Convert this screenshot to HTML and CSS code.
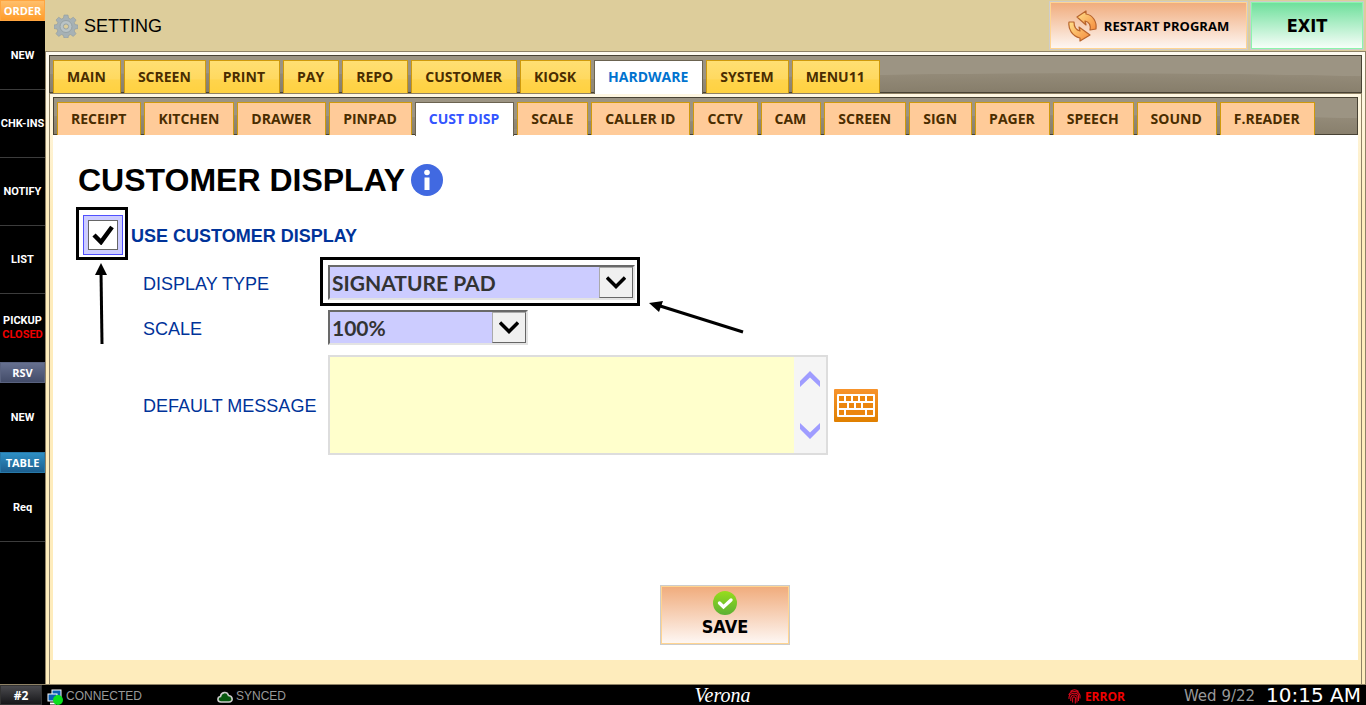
FILE: index.html
```html
<!DOCTYPE html>
<html lang="en">

<head>
  <meta charset="utf-8">
  <title>Setting - Customer Display</title>
  <link rel="stylesheet" href="styles.css">
</head>

<body>
  <div class="app">
    <div class="workspace">
      <!-- Left: order queue shortcuts -->
      <nav class="sidebar">
        <div class="side-title order">ORDER</div>
        <button class="side-item">NEW</button>
        <button class="side-item">CHK-INS</button>
        <button class="side-item">NOTIFY</button>
        <button class="side-item">LIST</button>
        <button class="side-item last">PICKUP<span class="closed">CLOSED</span></button>
        <div class="side-title rsv">RSV</div>
        <button class="side-item last">NEW</button>
        <div class="side-title table">TABLE</div>
        <button class="side-item">Req</button>
      </nav>

      <main class="main">
        <header class="header">
          <svg class="gear" width="24" height="24" viewBox="0 0 24 24">
            <g fill="#a6b1b5" stroke="#8f9b9f" stroke-width=".6">
              <path d="M10 1h4l.6 3.200 2 .8 2.700-1.800 2.800 2.800L20.300 8.600l.8 2L24 11v3.500l-3 .5-.8 2 1.800 2.700-2.700 2.700-2.700-1.800-2 .8L14 24h-4l-.6-2.600-2-.8-2.700 1.800L2 19.700 3.800 17 3 15l-3-.5V11l3-.5.8-2L2 6l2.700-2.800L7.400 5l2-.8z" />
            </g>
            <circle cx="12" cy="12.500" r="6" fill="#b9c3c6" stroke="#96a2a6" />
            <circle cx="12" cy="12.500" r="2.600" fill="#dccd9b" stroke="#96a2a6" />
          </svg>
          <span class="header-title">SETTING</span>
          <button class="btn restart">
            <svg width="30" height="32" viewBox="0 0 30 32" stroke="#b8642c" stroke-width="1.200" stroke-linejoin="round">
              <defs>
                <linearGradient id="arrowFill" x1="0" y1="0" x2="1" y2="1">
                  <stop offset="0" stop-color="#ffe08a" />
                  <stop offset="1" stop-color="#f58a3c" />
                </linearGradient>
              </defs>
              <path fill="url(#arrowFill)" d="M9 7L18 1v3c7 1 11 8 10 15l-6 1c1-5-1-8-5-9l1 4z" />
              <path fill="url(#arrowFill)" d="M22 25l-10 6v-3C4 26 0 19 1 12h5c0 5 2 8 6 9l-1-4z" />
            </svg>
            RESTART PROGRAM
          </button>
          <button class="btn exit">EXIT</button>
        </header>

        <div class="frame">
          <div class="tabs" role="tablist">
            <button class="tab">MAIN</button>
            <button class="tab">SCREEN</button>
            <button class="tab">PRINT</button>
            <button class="tab">PAY</button>
            <button class="tab">REPO</button>
            <button class="tab">CUSTOMER</button>
            <button class="tab">KIOSK</button>
            <button class="tab active">HARDWARE</button>
            <button class="tab">SYSTEM</button>
            <button class="tab">MENU11</button>
          </div>

          <div class="subframe">
            <div class="tabs subtabs" role="tablist">
              <button class="tab">RECEIPT</button>
              <button class="tab">KITCHEN</button>
              <button class="tab">DRAWER</button>
              <button class="tab">PINPAD</button>
              <button class="tab active">CUST DISP</button>
              <button class="tab">SCALE</button>
              <button class="tab">CALLER ID</button>
              <button class="tab">CCTV</button>
              <button class="tab">CAM</button>
              <button class="tab">SCREEN</button>
              <button class="tab">SIGN</button>
              <button class="tab">PAGER</button>
              <button class="tab">SPEECH</button>
              <button class="tab">SOUND</button>
              <button class="tab">F.READER</button>
            </div>

            <section class="content">
              <div class="title-row">
                <h1>CUSTOMER DISPLAY</h1>
                <svg width="32" height="32" viewBox="0 0 32 32">
                  <circle cx="16" cy="16" r="16" fill="#4169e1" />
                  <circle cx="16" cy="8.500" r="2.800" fill="#fff" />
                  <rect x="13.500" y="13.500" width="5" height="12.500" fill="#fff" />
                </svg>
              </div>

              <div class="check-row">
                <div class="checkbox">
                  <input type="checkbox" id="use-display" checked>
                  <svg class="tick" width="22" height="20" viewBox="0 0 22 20">
                    <path d="M2 10l7 7L20 2" fill="none" stroke="#000" stroke-width="4.500" />
                  </svg>
                  <span class="callout"></span>
                  <svg class="arrow-up" width="12" height="82" viewBox="0 0 12 82">
                    <path d="M6 8l1 73" stroke="#000" stroke-width="3" />
                    <path d="M6 0l6 12H0z" />
                  </svg>
                </div>
                <label for="use-display">USE CUSTOMER DISPLAY</label>
              </div>

              <div class="fields">
                <label for="display-type">DISPLAY TYPE</label>
                <div class="select wide">
                  <select id="display-type">
                    <option>SIGNATURE PAD</option>
                  </select>
                  <span class="drop">
                    <svg width="20" height="14" viewBox="0 0 20 14">
                      <path d="M1 1.500l9 9 9-9" fill="none" stroke="#000" stroke-width="3.400" />
                    </svg>
                  </span>
                  <span class="callout"></span>
                  <svg class="arrow-left" width="96" height="34" viewBox="0 0 96 34">
                    <path d="M8 4l86 27" stroke="#000" stroke-width="3" />
                    <path d="M0 2l14-2-4 11z" />
                  </svg>
                </div>

                <label for="scale">SCALE</label>
                <div class="select">
                  <select id="scale">
                    <option>100%</option>
                  </select>
                  <span class="drop">
                    <svg width="20" height="14" viewBox="0 0 20 14">
                      <path d="M1 1.500l9 9 9-9" fill="none" stroke="#000" stroke-width="3.400" />
                    </svg>
                  </span>
                </div>

                <label for="message">DEFAULT MESSAGE</label>
                <div class="message-row">
                  <div class="message-box">
                    <textarea id="message"></textarea>
                    <div class="scroll">
                      <button aria-label="Scroll up">
                        <svg width="20" height="16" viewBox="0 0 20 16">
                          <path d="M10 0l10 10v6L10 6.500 0 16v-6z" fill="#9f9cff" />
                        </svg>
                      </button>
                      <button aria-label="Scroll down">
                        <svg width="20" height="16" viewBox="0 0 20 16">
                          <path d="M10 16L20 6V0L10 9.500 0 0v6z" fill="#9f9cff" />
                        </svg>
                      </button>
                    </div>
                  </div>
                  <button class="keyboard" aria-label="Keyboard">
                    <svg width="44" height="33" viewBox="0 0 44 33">
                      <defs>
                        <linearGradient id="kbFill" x1="0" y1="0" x2="0" y2="1">
                          <stop offset="0" stop-color="#f7932c" />
                          <stop offset="1" stop-color="#e08000" />
                        </linearGradient>
                      </defs>
                      <rect width="44" height="33" rx="1" fill="url(#kbFill)" />
                      <rect x="3" y="5" width="38" height="23" rx="1" fill="#fff" />
                      <g fill="#ec860e">
                        <path d="M5 7h5v5H5zM12 7h5v5h-5zM19 7h5v5h-5zM26 7h5v5h-5zM33 7h6v5h-6z" />
                        <path d="M5 14h8v5H5zM15 14h5v5h-5zM22 14h5v5h-5zM29 14h10v5H29z" />
                        <path d="M5 21h5v5H5zM12 21h19v5H12zM33 21h6v5h-6z" />
                      </g>
                    </svg>
                  </button>
                </div>
              </div>

              <div class="save-row">
                <button class="btn save">
                  <svg width="24" height="24" viewBox="0 0 24 24">
                    <defs>
                      <linearGradient id="okFill" x1="0" y1="0" x2="0" y2="1">
                        <stop offset="0" stop-color="#97dd1c" />
                        <stop offset="1" stop-color="#5cb034" />
                      </linearGradient>
                    </defs>
                    <circle cx="12" cy="12" r="12" fill="url(#okFill)" />
                    <path d="M6.500 12l4 4 7.500-7" fill="none" stroke="#fff" stroke-width="3.400" stroke-linecap="round" />
                  </svg>
                  SAVE
                </button>
              </div>
            </section>
          </div>
        </div>
      </main>
    </div>

    <!-- Bottom status bar -->
    <footer class="statusbar">
      <div class="status-left">
        <span class="station">#2</span>
        <span class="status connected">
          <svg width="16" height="16" viewBox="0 0 16 16">
            <rect x="5" y="1" width="9" height="8" fill="#0a5fb4" stroke="#fff" />
            <rect x="1" y="5" width="9" height="7" fill="#0a5fb4" stroke="#fff" />
            <path d="M3 14.500h6" stroke="#fff" stroke-width="2" />
            <circle cx="11" cy="11" r="5" fill="#0be01e" />
          </svg>
          CONNECTED
        </span>
        <span class="status">
          <svg width="16" height="12" viewBox="0 0 16 12">
            <path d="M4 11C0 11 0 6 3.500 5.500 4 1 10 0 11.500 4.500 16 5 16.500 11 12 11z" fill="#06570e" stroke="#ccc" stroke-width="1.600" />
          </svg>
          SYNCED
        </span>
      </div>
      <span class="brand">Verona</span>
      <div class="status-right">
        <span class="status error">
          <svg width="13" height="15" viewBox="0 0 13 15" fill="none" stroke="#d8081c" stroke-width="1.100">
            <path d="M2.500 2.500Q6.500-1 10.500 2.500M.8 6Q2 2.500 6.500 2.500T12 6.500v3M1 10V8Q2 4.300 6.500 4.300T10.500 8v4M2.800 12V8.500Q3.500 6 6.500 6T9 9v4.500M4.600 13.500V9.500Q5 7.500 6.500 8T7.300 11v3.500" />
          </svg>
          ERROR
        </span>
        <span class="date">Wed 9/22</span>
        <span class="time">10:15 AM</span>
      </div>
    </footer>
  </div>
</body>

</html>
```

FILE: styles.css
```css
*,
*::before {
  box-sizing: border-box;
}

body {
  margin: 0;
  background: #000;
  font-family: "Liberation Sans", Arial, sans-serif;
}

button {
  margin: 0;
  padding: 0;
  border: none;
  background: none;
  font-family: inherit;
  cursor: pointer;
}

svg {
  display: block;
  flex-shrink: 0;
}

.app {
  display: flex;
  flex-direction: column;
  min-height: 100vh;
}

.workspace {
  flex: 1;
  display: flex;
}

/* Sidebar */
.sidebar {
  width: 45px;
  flex-shrink: 0;
  background: #000;
}

.side-title {
  height: 21px;
  margin-bottom: 1px;
  border: 1px solid;
  color: #fff;
  font: bold 11px/19px "Open Sans", sans-serif;
  text-align: center;
}

.side-title.order {
  background: linear-gradient(#ffbf6b, #ff9c2a);
  border-color: #ffa540;
}

.side-title.rsv {
  background: linear-gradient(#66708f, #434c69);
  border-color: #59627f;
}

.side-title.table {
  background: linear-gradient(#2e8fc4, #1d5f8f);
  border-color: #2778a8;
}

.side-item {
  display: flex;
  flex-direction: column;
  align-items: center;
  justify-content: center;
  width: 100%;
  height: 68px;
  border-bottom: 1px solid #3c3c3c;
  color: #fff;
  font: bold 11px/14px Roboto, sans-serif;
}

.side-item.last {
  border-bottom: none;
}

.closed {
  color: #f00000;
}

/* Header */
.main {
  flex: 1;
  display: flex;
  flex-direction: column;
}

.header {
  display: flex;
  align-items: center;
  height: 51px;
  padding: 0 2px 0 9px;
  background: #ddcd9b;
}

.header-title {
  flex: 1;
  padding: 2px 0 0 6px;
  font-size: 18px;
}

.btn {
  display: flex;
  align-items: center;
  justify-content: center;
  border: 1px solid #ccc;
  box-shadow: inset 0 0 0 1px #ffd491;
  background: linear-gradient(#f0ab7b, #fef8f5);
  color: #000;
  font: bold 18px/24px "DejaVu Sans Condensed", "DejaVu Sans", sans-serif;
}

.restart {
  gap: 6px;
  width: 199px;
  height: 49px;
  margin-right: 2px;
  font: bold 13px/18px "Open Sans", sans-serif;
}

.exit {
  width: 114px;
  height: 49px;
  box-shadow: inset 0 0 0 1px #8cf5ac;
  background: linear-gradient(#6cdf9a, #fafffb);
}

/* Tabs */
.frame {
  flex: 1;
  display: flex;
  flex-direction: column;
  padding: 3px 3px 0;
  border: 1px solid #8f8266;
  border-bottom: none;
  background: linear-gradient(#fffbf0, #feecbc 160px);
}

.subframe {
  flex: 1;
  display: flex;
  flex-direction: column;
  padding: 3px 3px 24px;
  border: 1px solid #8f8266;
  border-bottom: none;
}

.tabs {
  display: flex;
  gap: 3px;
  height: 38px;
  padding: 4px 3px 0;
  border: 1px solid #484234;
  background:
    radial-gradient(ellipse 900px 60px at 79% 77px, #877e6b 70%, #938a78 99%, transparent 100%),
    radial-gradient(ellipse 900px 60px at 12% 77px, #877e6b 70%, #938a78 99%, transparent 100%),
    #9c9483;
}

.tab {
  height: 33px;
  padding: 0 14px 0 13px;
  border: 1px solid #cf9a0c;
  border-bottom: none;
  background: linear-gradient(#ffdf73, #ffd960 55%, #ffd44c 60%, #ffd140);
  color: #4a2d00;
  font: bold 14px/32px "Open Sans", sans-serif;
  white-space: nowrap;
}

.subtabs .tab {
  background: #ffcb99;
}

.tab.active {
  position: relative;
  height: 34px;
  padding-bottom: 1px;
  border-color: #6b6350;
  background: #fff;
  color: #0073cf;
}

.subtabs .tab.active {
  background: #fff;
  color: #3355ff;
}

/* Customer display form */
.content {
  flex: 1;
  display: flex;
  flex-direction: column;
  padding: 29px 0 15px 25px;
  background: #fff;
  color: #003399;
  font-size: 18px;
}

.content label {
  padding-top: 3px;
}

.title-row {
  display: flex;
  align-items: center;
  gap: 6px;
  height: 32px;
}

h1 {
  margin: 0;
  color: #000;
  font-size: 32px;
  line-height: 32px;
}

.check-row {
  display: flex;
  align-items: center;
  gap: 8px;
  margin: 19px 0 0 5px;
  font-weight: bold;
}

.checkbox {
  position: relative;
  display: grid;
  place-items: center;
}

.checkbox > input,
.tick {
  grid-area: 1 / 1;
}

.checkbox > input {
  appearance: none;
  width: 40px;
  height: 40px;
  margin: 0;
  border: 1px solid #5050ff;
  background: #ccccff;
  display: grid;
  place-items: center;
}

.checkbox > input::before {
  content: "";
  width: 30px;
  height: 30px;
  border: 1px solid #666;
  background: #fff;
}

.tick {
  position: relative;
  pointer-events: none;
}

/* Black highlight box drawn around a control */
.callout {
  position: absolute;
  inset: -8px -5px -5px -7px;
  border: 3px solid #000;
  pointer-events: none;
}

.arrow-up {
  position: absolute;
  top: 48px;
  left: 12px;
}

.arrow-left {
  position: absolute;
  top: 34px;
  left: 319px;
}

.fields {
  display: grid;
  grid-template-columns: 185px auto;
  align-items: center;
  justify-content: start;
  row-gap: 10px;
  margin: 10px 0 0 65px;
}

.select {
  position: relative;
  display: flex;
  width: 200px;
  height: 35px;
  border: 2px solid;
  border-color: #696969 #e3e3e3 #e3e3e3 #696969;
  background: #ccccff;
}

.select.wide {
  width: 307px;
}

.select select {
  flex: 1;
  appearance: none;
  padding: 0 34px 0 2px;
  border: none;
  background: none;
  color: #333;
  font: bold 21px/30px Lato, sans-serif;
}

.drop {
  position: absolute;
  top: 0;
  right: 0;
  display: grid;
  place-items: center;
  width: 34px;
  height: 31px;
  border: 1px solid #666;
  border-color: #aaa #666 #666 #aaa;
  background: #f0f0f0;
  pointer-events: none;
}

.select .callout {
  inset: -10px -7px -8px -10px;
}

.message-row {
  display: flex;
  align-items: center;
  gap: 6px;
}

.message-box {
  display: flex;
  width: 500px;
  height: 100px;
  border: 2px solid #ddd;
  background: #ffffcc;
}

textarea {
  flex: 1;
  padding: 2px;
  border: none;
  background: none;
  resize: none;
  font: bold 21px/26px Lato, sans-serif;
}

.scroll {
  display: flex;
  flex-direction: column;
  align-items: center;
  justify-content: space-between;
  width: 32px;
  padding: 14px 0;
  background: #f5f5f5;
}

.save-row {
  display: flex;
  justify-content: center;
  margin-top: auto;
  padding-left: 14px;
}

.save {
  flex-direction: column;
  width: 130px;
  height: 60px;
}

/* Status bar */
.statusbar {
  display: flex;
  align-items: center;
  height: 21px;
  border-top: 1px solid #8f8266;
  background: #000;
  color: #999;
  font-size: 12px;
}

.status-left,
.status-right {
  flex: 1;
  display: flex;
  align-items: center;
}

.status-right {
  justify-content: flex-end;
  padding-right: 5px;
}

.station {
  width: 42px;
  height: 20px;
  margin-right: 5px;
  border: 1px solid #333;
  background: linear-gradient(#4a4a4e, #17171a);
  color: #fff;
  font: bold 12px/20px "Open Sans", sans-serif;
  text-align: center;
}

.status {
  display: flex;
  align-items: center;
  gap: 3px;
  padding-top: 3px;
  line-height: 17px;
}

.connected {
  width: 170px;
}

.brand {
  margin-left: 84px;
  color: #fff;
  font: italic 20px/20px "Liberation Serif", serif;
}

.error {
  gap: 4px;
  margin-right: 59px;
  color: #f00000;
  font: bold 12px/17px "Open Sans", sans-serif;
}

.date {
  margin-right: 11px;
  padding-top: 3px;
  font: 15px/17px "DejaVu Sans", sans-serif;
}

.time {
  color: #fff;
  font: 20px/20px "DejaVu Sans", sans-serif;
}
```
